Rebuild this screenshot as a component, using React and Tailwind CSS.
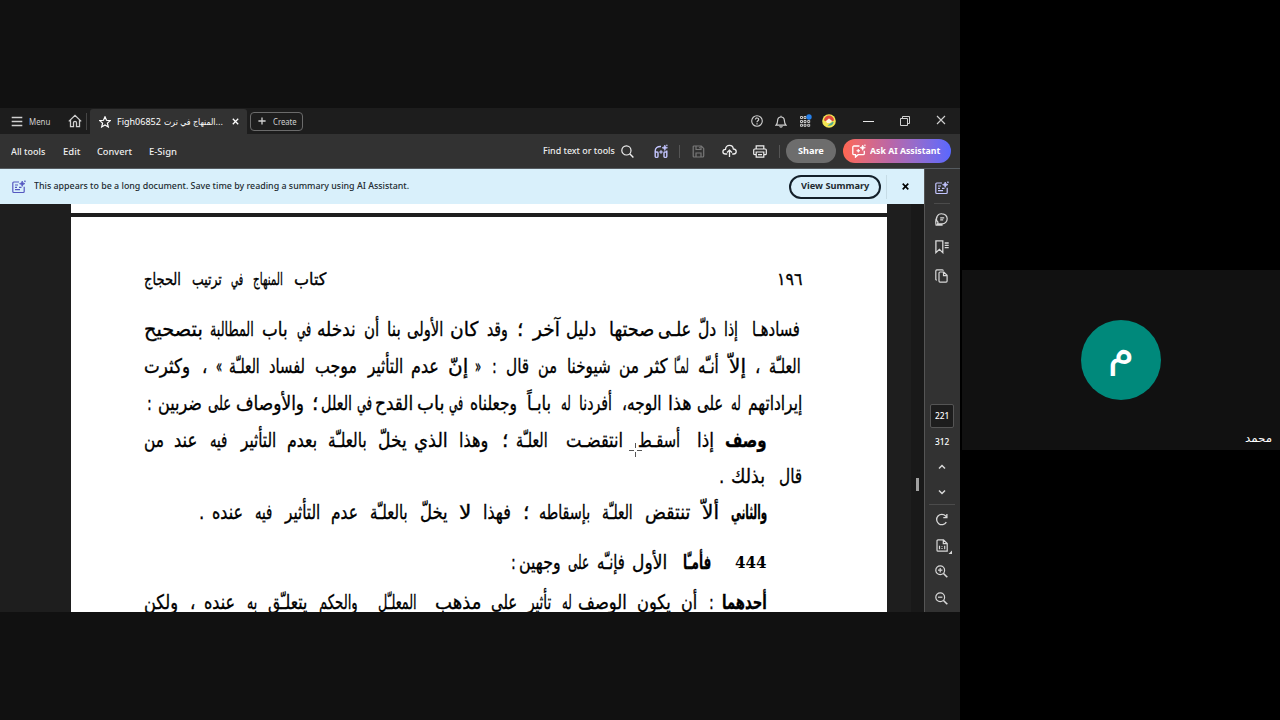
import { useLayoutEffect, useRef } from "react";

// right-to-left words of the open page: [text, left, right, bold]
const HEADING = [
  ["١٩٦", 777, 802],
  ["كتاب", 294, 326],
  ["المنهاج", 253, 283],
  ["في", 231, 243],
  ["ترتيب", 192, 222],
  ["الحجاج", 144, 181],
];

const LINES = [
  {
    gap: "mt-[26px]",
    words: [
      ["فسادهـا", 752, 800], ["إذا", 724, 738], ["دلّ", 698, 716], ["علـى", 658, 691],
      ["صحتها", 609, 654], ["دليل", 566, 596], ["آخر", 533, 560], ["؛", 517, 523],
      ["وقد", 487, 508], ["كان", 450, 478], ["الأولى", 407, 443], ["بنا", 387, 401],
      ["أن", 364, 379], ["ندخله", 317, 356], ["في", 297, 311], ["باب", 262, 288],
      ["المطالبة", 210, 254], ["بتصحيح", 144, 203],
    ],
  },
  {
    gap: "mt-[13px]",
    words: [
      ["العلـّة", 769, 801], ["،", 755, 760], ["إلاّ", 729, 746], ["أنـّه", 698, 719],
      ["لمـّا", 674, 689], ["كثر", 645, 668], ["من", 619, 639], ["شيوخنا", 567, 611],
      ["من", 538, 557], ["قال", 506, 529], [":", 492, 497], ["«", 475, 481],
      ["إنّ", 448, 468], ["عدم", 411, 439], ["التأثير", 368, 403], ["موجب", 315, 357],
      ["لفساد", 269, 305], ["العلـّة", 229, 260], ["»", 216, 222], ["،", 202, 207],
      ["وكثرت", 144, 190],
    ],
  },
  {
    gap: "mt-[13px]",
    words: [
      ["إيراداتهم", 748, 802], ["له", 731, 741], ["على", 697, 723], ["هذا", 668, 692],
      ["الوجه،", 622, 662], ["أفردنا", 579, 612], ["له", 561, 571], ["بابـاً", 527, 551],
      ["وجعلناه", 470, 517], ["في", 449, 463], ["باب", 417, 445], ["القدح", 375, 413],
      ["في", 357, 372], ["العلل", 321, 352], ["؛", 312, 318], ["والأوصاف", 236, 304],
      ["على", 208, 231], ["ضربين", 158, 202], [":", 147, 152],
    ],
  },
  {
    gap: "mt-[13px]",
    words: [
      ["وصف", 725, 767, true], ["إذا", 697, 714], ["أسقـط", 638, 680], ["انتقضـت", 566, 623],
      ["العلـّة", 516, 548], ["؛", 502, 508], ["وهذا", 459, 488], ["الذي", 414, 448],
      ["يخلّ", 378, 407], ["بالعلـّة", 328, 367], ["بعدم", 287, 317], ["التأثير", 241, 276],
      ["فيه", 210, 227], ["عند", 174, 197], ["من", 144, 164],
    ],
  },
  {
    gap: "mt-[12px]",
    words: [["قال", 779, 802], ["بذلك", 731, 765], [".", 719, 724]],
  },
  {
    gap: "mt-[12px]",
    words: [
      ["والثاني", 731, 767, true], ["ألاّ", 702, 719], ["تنتقض", 645, 690], ["العلـّة", 602, 633],
      ["بإسقاطه", 539, 590], ["؛", 523, 529], ["فهذا", 483, 511], ["لا", 459, 471],
      ["يخلّ", 420, 448], ["بالعلـّة", 370, 408], ["عدم", 331, 358], ["التأثير", 285, 320],
      ["فيه", 255, 272], ["عنده", 212, 243], [".", 199, 204],
    ],
  },
  {
    gap: "mt-[26px]",
    words: [
      ["444", 735, 767, true], ["فأمـّا", 683, 711, true], ["الأول", 632, 667], ["فإنـّه", 597, 625],
      ["على", 568, 589], ["وجهين", 519, 561], [":", 511, 516],
    ],
  },
  {
    gap: "mt-[16px]",
    words: [
      ["أحدهما", 722, 767, true], [":", 709, 714], ["أن", 681, 697], ["يكون", 637, 671],
      ["الوصف", 578, 627], ["له", 562, 572], ["تأثير", 528, 551], ["على", 491, 517],
      ["مذهب", 435, 481], ["المعلـّل", 378, 417], ["والحكم", 319, 358], ["يتعلـّق", 268, 307],
      ["به", 247, 257], ["عنده", 204, 235], ["،", 190, 195], ["ولكن", 144, 178],
    ],
  },
];

export default function App() {
  return (
    <div className="flex h-[720px] w-[1280px] overflow-hidden bg-black font-['Noto_Sans','DejaVu_Sans',sans-serif]">
      {/* SHARED SCREEN */}
      <div className="flex w-[960px] flex-col justify-center bg-[#111111]">
        <div className="flex h-[504px] flex-col overflow-hidden bg-[#1d1d1d]">
          <TitleBar />
          <Toolbar />
          <div className="flex h-[443px]">
            <div className="flex w-[924px] flex-col">
              <Banner />
              <Document />
            </div>
            <SidePanel />
          </div>
        </div>
      </div>

      {/* PARTICIPANT */}
      <div className="flex flex-1 flex-col justify-center pl-[2px]">
        <div className="grid h-[180px] grid-rows-[50px_80px_50px] bg-[#111111]">
          <div className="row-start-2 flex h-20 w-20 items-center justify-center justify-self-center rounded-full bg-[#00897b] pb-[17px]">
            <span className="font-['DejaVu_Sans',sans-serif] text-[43px] leading-[43px] text-white">م</span>
          </div>
          <div className="row-start-3 mt-[24px] mr-[8px] flex h-4 justify-end text-white">
            <Fit width={27} className="font-['DejaVu_Sans',sans-serif] text-[11px] leading-4" dir="rtl">محمد</Fit>
          </div>
        </div>
      </div>
    </div>
  );
}

/* ---------- Text ---------- */
// squeezes or stretches one run of text to the given width
function Fit({ width, className = "", dir = "ltr", children }) {
  const ref = useRef(null);

  useLayoutEffect(() => {
    const el = ref.current;
    const fit = () => {
      el.style.transform = `scaleX(${width / el.offsetWidth})`;
    };
    fit();
    document.fonts.ready.then(fit);
  }, [width]);

  return (
    <span dir="ltr" className="block shrink-0" style={{ width }}>
      <span ref={ref} dir={dir} className={`inline-block origin-left whitespace-nowrap ${className}`}>
        {children}
      </span>
    </span>
  );
}

function Line({ words, className, size = "text-[20px]" }) {
  let edge = 887;
  return (
    <div dir="rtl" className={`flex h-6 shrink-0 ${className}`}>
      {words.map(([text, left, right, bold], i) => {
        const space = edge - right;
        edge = left;
        return (
          <div key={i} style={{ marginRight: space }}>
            <Fit
              width={right - left}
              dir="rtl"
              className={`leading-6 text-black ${text === "444" ? "font-['DejaVu_Serif',serif] text-[17px]" : `font-['DejaVu_Sans',sans-serif] [-webkit-text-stroke:0.35px_black] ${size}`} ${bold ? "font-bold" : "font-normal"}`}
            >
              {text}
            </Fit>
          </div>
        );
      })}
    </div>
  );
}

/* ---------- Window ---------- */
function TitleBar() {
  return (
    <header className="flex h-[26px] shrink-0 items-center text-[9px] text-[#d0d0d0]">
      <Icon className="ml-[11px] h-[12px] w-[12px]" box="0 0 12 12">
        <path d="M.7 2.500h10.600M.7 6.500h10.600M.7 10.500h10.600" strokeWidth="1.300" />
      </Icon>
      <div className="mt-px ml-[6px]"><Fit width={21}>Menu</Fit></div>
      <Icon className="ml-[18px] h-[14px] w-[14px]" box="0 0 14 14">
        <path d="M.8 7.400 7 1.400l6.200 6M2.500 6v6.600h3V8.800a1.500 1.500 0 0 1 3 0v3.800h3V6" strokeWidth="1.300" />
      </Icon>
      <div className="ml-[4px] h-[17px] w-px bg-[#454545]" />
      <div className="ml-[3px] flex h-[25px] w-[157px] items-center self-end rounded-t-[3px] bg-[#323232] text-white">
        <Icon className="ml-[9px] h-[12px] w-[12px]" box="0 0 12 12">
          <path d="m6 .8 1.500 3.500 3.800.3-2.900 2.500.9 3.800L6 8.900l-3.300 2 .9-3.800L.7 4.600l3.800-.3z" strokeWidth="1.200" />
        </Icon>
        <div className="mt-px ml-[6px] flex">
          <Fit width={44}>Figh06852</Fit>
          <div className="ml-[3px]">
            <Fit width={59} className="font-['DejaVu_Sans',sans-serif]">المنهاج في ترت...</Fit>
          </div>
        </div>
        <Icon className="ml-[9px] h-[7px] w-[7px]" box="0 0 7 7">
          <path d="m.8.8 5.400 5.400m0-5.400L.8 6.200" strokeWidth="1.300" />
        </Icon>
      </div>
      <div className="ml-[3px] flex h-[19px] w-[53px] items-center rounded-[4px] border border-[#6b6b6b]">
        <Icon className="ml-[7px] h-[8px] w-[8px]" box="0 0 8 8">
          <path d="M4 .4v7.200M.4 4h7.200" strokeWidth="1.300" />
        </Icon>
        <div className="mt-px ml-[7px]"><Fit width={24}>Create</Fit></div>
      </div>

      <div className="ml-auto flex items-center">
        <Cell>
          <Icon className="h-[12px] w-[12px]" box="0 0 12 12">
            <circle cx="6" cy="6" r="5.300" strokeWidth="1.100" />
            <path d="M4.400 4.600c0-2.300 3.400-2 3.300-.1C7.700 5.800 6 5.600 6 7.200M6 8.300v1.100" strokeWidth="1.200" />
          </Icon>
        </Cell>
        <Cell>
          <Icon className="h-[13px] w-[12px]" box="0 0 12 13">
            <path d="M1 10.100h10c-1.600-1.500-1.500-2.400-1.600-4.500C9.200 3 8.200 2 6 2S2.800 3 2.600 5.600C2.500 7.700 2.600 8.600 1 10.100zM6 2V.8M4.700 11.200c.3 1.300 2.300 1.300 2.600 0" strokeWidth="1.200" />
          </Icon>
        </Cell>
        <Cell>
          <svg className="h-[14px] w-[14px]" viewBox="0 0 14 14">
            <g fill="none" stroke="#c8c8c8" strokeWidth="1">
              <path d="M2.500 2.500h2v2h-2zM6 2.500h2v2H6zM2.500 6.500h2v2h-2zM6 6.500h2v2H6zM9.700 6.500h2v2h-2zM2.500 10.300h2v2h-2zM6 10.300h2v2H6zM9.700 10.300h2v2h-2z" />
            </g>
            <circle cx="11" cy="3" r="2.700" fill="#2680eb" />
          </svg>
        </Cell>
        <Cell>
          <svg className="h-[14px] w-[14px]" viewBox="0 0 14 14">
            <circle cx="7" cy="7" r="6.800" fill="#f3e552" />
            <path d="M2 6.600a5 5 0 0 1 10 0l-2 .6-3-2.700-3 2.700z" fill="#e2483d" />
            <path d="m4 7 3-2.500L10 7 8 9H5z" fill="#fff4dc" />
            <path d="m5.500 11.500 5.500-4 .5 1c-.5 2.500-3 3.900-6 3z" fill="#4daa91" />
          </svg>
        </Cell>
        <div className="ml-[9px] flex w-[36px] justify-center"><div className="h-px w-[11px] bg-[#e8e8e8]" /></div>
        <div className="flex w-[37px] justify-center">
          <Icon className="h-[10px] w-[10px]" box="0 0 10 10">
            <path d="M.5 2.500h7v7h-7zM2.500 2.500v-2h7v7h-2" />
          </Icon>
        </div>
        <div className="mr-[1px] mb-[2px] flex w-[36px] justify-center">
          <Icon className="h-[10px] w-[10px]" box="0 0 10 10"><path d="m1 1 8 8m0-8L1 9" strokeWidth="1.100" /></Icon>
        </div>
      </div>
    </header>
  );
}

function Toolbar() {
  return (
    <nav className="flex h-[35px] shrink-0 items-center border-b border-[#555b60] bg-[#323232] text-[9.500px] font-medium text-[#eeeeee]">
      <div className="mt-[2px] ml-[11px] flex">
        <Fit width={34}>All tools</Fit>
        <div className="ml-[18px]"><Fit width={17}>Edit</Fit></div>
        <div className="ml-[17px]"><Fit width={35}>Convert</Fit></div>
        <div className="ml-[17px]"><Fit width={28}>E-Sign</Fit></div>
      </div>

      <div className="ml-auto flex items-center">
        <div className="mt-px"><Fit width={72}>Find text or tools</Fit></div>
        <Icon className="ml-[6px] h-[13px] w-[13px]" box="0 0 13 13">
          <circle cx="5.400" cy="5.400" r="4.600" strokeWidth="1.200" /><path d="m8.700 8.700 3.700 3.700" strokeWidth="1.400" />
        </Icon>
        <Icon className="ml-[20px] h-[15px] w-[14px] text-[#c3c5ff]" box="0 0 14 15">
          <path d="M1.200 9V7C1.200 4 3.500 2.300 7 2.500M12.800 9V6.500M1.200 8.700c0-1 2.800-1 2.800 0v3.800c0 1.200-2.800 1.200-2.800 0zM10 8.700c0-1 2.800-1 2.800 0v3.800c0 1.200-2.800 1.200-2.800 0z" strokeWidth="1.400" />
          <path d="m10.800 1 .8 2 2 .8-2 .8-.8 2-.8-2-2-.8 2-.8zM7 6.300l.5 1.200 1.200.5-1.200.5L7 9.700l-.5-1.200-1.200-.5 1.200-.5zM12.800.5v1.800M11.900 1.400h1.800" fill="currentColor" strokeWidth=".6" />
        </Icon>
        <div className="ml-[11px] h-[13px] w-px bg-[#555555]" />
        <Icon className="ml-[12px] h-[13px] w-[13px] text-[#787878]" box="0 0 12 13">
          <path d="M1.500 1h7.300L11.200 3.400v7.600c0 .6-.4 1-1 1H1.700c-.6 0-1-.4-1-1V1.900c0-.5.300-.9.800-.9zM3.500 1v3.500h5V1M3.500 12V8h5v4M7 2.200v1" strokeWidth="1.200" />
        </Icon>
        <Icon className="ml-[17px] h-[14px] w-[15px]" box="0 0 15 14">
          <path d="M5.300 10H3.600C-.1 9.800.1 5.500 3.500 5.300 4.100.2 10.900.3 11.300 5c3.900.2 3.700 4.900.5 5h-1.600M7.500 13V6.200M5 8.500l2.500-2.400L10 8.500" strokeWidth="1.300" />
        </Icon>
        <Icon className="ml-[16px] h-[13px] w-[14px]" box="0 0 14 13">
          <path d="M3.200 4V.8h7.600V4M3.200 9.700H1.700c-.6 0-1-.4-1-1V5c0-.6.400-1 1-1h10.600c.6 0 1 .4 1 1v3.700c0 .6-.4 1-1 1h-1.500M3.200 7h7.600v5.200H3.200zM5 9.600h4" strokeWidth="1.200" />
        </Icon>
        <div className="ml-[12px] h-[13px] w-px bg-[#555555]" />
        <div className="ml-[6px] flex h-6 w-[50px] items-center justify-center rounded-full bg-[#6d6d6d] font-bold text-white">
          <Fit width={26}>Share</Fit>
        </div>
        <div className="mr-[9px] ml-[7px] flex h-6 w-[108px] items-center rounded-full bg-linear-to-r from-[#ff6650] via-[#b866a9] via-45% to-[#5967ff] font-bold text-white">
          <Icon className="ml-[9px] h-[14px] w-[14px]" box="0 0 14 14">
            <path d="M7.500 2H2c-.7 0-1.200.5-1.200 1.200v6.300c0 .7.500 1.200 1.200 1.200h1.500v2.400l2.600-2.400h5c.7 0 1.200-.5 1.200-1.200V6.800" strokeWidth="1.300" />
            <path d="m10.700 1 .8 1.900 1.900.8-1.900.8-.8 1.900-.8-1.900L8 3.700l1.900-.8zM6.300 5l.5 1.200 1.200.5-1.200.5-.5 1.200-.5-1.200-1.200-.5 1.200-.5zM12.900.4v1.800M12 1.300h1.800" fill="currentColor" strokeWidth=".6" />
          </Icon>
          <div className="ml-[4px]"><Fit width={70}>Ask AI Assistant</Fit></div>
        </div>
      </div>
    </nav>
  );
}

function Banner() {
  return (
    <div className="flex h-[35px] shrink-0 items-center bg-[#d9f0fb] text-[9.500px] font-medium text-[#222b30]">
      <AssistantIcon className="ml-[12px] text-[#5558c0]" />
      <div className="ml-[8px]">
        <Fit width={375}>This appears to be a long document. Save time by reading a summary using AI Assistant.</Fit>
      </div>
      <button className="ml-auto flex h-6 w-[92px] items-center justify-center rounded-full border-2 border-[#14202a] font-bold text-[#222b30]">
        <Fit width={68}>View Summary</Fit>
      </button>
      <div className="ml-[5px] h-6 w-px bg-[#c6dce6]" />
      <Icon className="mr-[15px] mb-px ml-[15px] h-[7px] w-[7px] text-black" box="0 0 6 6">
        <path d="m.6.6 4.800 4.800m0-4.800L.6 5.400" strokeWidth="1.400" />
      </Icon>
    </div>
  );
}

function Document() {
  return (
    <main className="flex h-[408px] bg-[#1e1e1e] pl-[71px]">
      <div className="flex w-[816px] flex-col">
        <div className="h-[9px] shrink-0 bg-white" />
        <div className="mt-[4px] flex h-[395px] flex-col overflow-hidden bg-white">
          <Line words={HEADING} className="mt-[50px]" size="text-[17px]" />
          {LINES.map((line, i) => (
            <Line key={i} words={line.words} className={line.gap} />
          ))}
        </div>
      </div>
      {/* text cursor lying over the page */}
      <div className="relative w-0">
        <svg className="absolute top-[239px] -left-[258px] h-[14px] w-[13px]" viewBox="0 0 13 14">
          <path d="M6.500 0v5M6.500 9v5M0 7.500h5M8 7.500h5" stroke="#555" strokeWidth="1" />
        </svg>
      </div>
      <div className="ml-[24px] flex w-[13px] justify-center bg-[#191919]">
        <div className="mt-[274px] h-[13px] w-[3px] bg-[#a0a0a0]" />
      </div>
    </main>
  );
}

function SidePanel() {
  return (
    <aside className="flex w-[36px] flex-col items-center border-l border-[#555555] bg-[#323232] pr-[2px] text-[9.500px] text-[#d8d8d8]">
      <AssistantIcon className="mt-[12px] text-[#c3c5ff]" />
      <div className="mt-[8px] h-px w-[16px] bg-[#4b4b4b]" />
      <Icon className="mt-[9px] h-[13px] w-[13px]" box="0 0 13 13">
        <path d="M7.200.8a5 5 0 1 1 0 10H2.600l.4-1.500A5 5 0 0 1 7.200.8zM2.200 4C.5 6 .4 8.500 1.100 12.200h6.500M5.200 4.800h4M5.200 6.800h3" strokeWidth="1.200" />
      </Icon>
      <Icon className="mt-[14px] h-[14px] w-[14px]" box="0 0 14 14">
        <path d="M.9.900h6.900v11.700L4.400 9.300.9 12.600zM9.700 3h4M9.700 5.300h4M9.700 7.600h4" strokeWidth="1.300" />
      </Icon>
      <Icon className="mt-[15px] h-[14px] w-[13px]" box="0 0 13 14">
        <path d="M5 3h3.800l3.300 3.300v5.800c0 .6-.4 1-1 1H5c-.6 0-1-.4-1-1V4c0-.6.400-1 1-1zM8.500 3.200v3.400h3.400M1.900 11.200c-.7 0-1.100-.4-1.100-1V1.900c0-.6.400-1 1-1h5.500c.7 0 1 .3 1 .9" strokeWidth="1.200" />
      </Icon>

      <div className="mt-[121px] flex h-[24px] w-[24px] shrink-0 items-center justify-center rounded-[2px] border border-[#555555] bg-[#1d1d1d] font-medium text-white">
        <Fit width={14}>221</Fit>
      </div>
      <div className="mt-[6px] font-medium text-white"><Fit width={14} className="leading-[15px]">312</Fit></div>
      <Icon className="mt-[15px] h-[6px] w-[8px]" box="0 0 8 6"><path d="m1 4.500 3-3 3 3" strokeWidth="1.500" /></Icon>
      <Icon className="mt-[19px] h-[6px] w-[8px]" box="0 0 8 6"><path d="m1 1.500 3 3 3-3" strokeWidth="1.500" /></Icon>
      <div className="mt-[9px] h-px w-[26px] shrink-0 bg-[#4b4b4b]" />
      <Icon className="mt-[8px] h-[13px] w-[13px]" box="0 0 13 13">
        <path d="M11.300 9.200A5.200 5.200 0 1 1 10.700 3l1 1.500M11.900 1v3.700H8.300" strokeWidth="1.300" />
      </Icon>
      <Icon className="mt-[13px] -mr-[5px] h-[16px] w-[17px]" box="0 0 17 16">
        <path d="M2 .8h5.500l3.700 3.700v7.700H2c-.6 0-1-.4-1-1V1.800c0-.6.400-1 1-1zM7.300 1v3.700H11M3.500 6.800v3.400M8.700 6.800v3.400M6 7.200v.9M6 9v.9" strokeWidth="1.200" />
        <path d="M16 11.500V15h-3.500z" fill="currentColor" stroke="none" />
      </Icon>
      <Icon className="mt-[10px] h-[13px] w-[13px]" box="0 0 13 13">
        <circle cx="5.200" cy="5.200" r="4.400" strokeWidth="1.200" /><path d="m8.500 8.500 3.800 3.800" strokeWidth="1.600" /><path d="M5.200 3v4.400M3 5.200h4.400" strokeWidth="1.200" />
      </Icon>
      <Icon className="mt-[14px] h-[13px] w-[13px]" box="0 0 13 13">
        <circle cx="5.200" cy="5.200" r="4.400" strokeWidth="1.200" /><path d="m8.500 8.500 3.800 3.800" strokeWidth="1.600" /><path d="M3 5.200h4.400" strokeWidth="1.200" />
      </Icon>
    </aside>
  );
}

/* ---------- Icons ---------- */
function Icon({ className, box, children }) {
  return (
    <svg className={`shrink-0 ${className}`} viewBox={box} fill="none" stroke="currentColor" strokeWidth="1">
      {children}
    </svg>
  );
}

function Cell({ children }) {
  return <div className="flex w-6 justify-center">{children}</div>;
}

function AssistantIcon({ className }) {
  return (
    <Icon className={`h-[14px] w-[14px] ${className}`} box="0 0 14 14">
      <path d="M7 2H1.800C1.200 2 .8 2.400.8 3v8.500c0 .6.400 1 1 1h9.400c.6 0 1-.4 1-1V6.800M3 5h3M3 7.300h2M3 9.700h5M7 7.300h2.500" strokeWidth="1.200" />
      <path d="m10.200 1 .8 1.900 1.900.8-1.900.8-.8 1.900-.8-1.900-1.900-.8 1.900-.8zM12.900.4v1.800M12 1.300h1.800" fill="currentColor" strokeWidth=".7" />
    </Icon>
  );
}
